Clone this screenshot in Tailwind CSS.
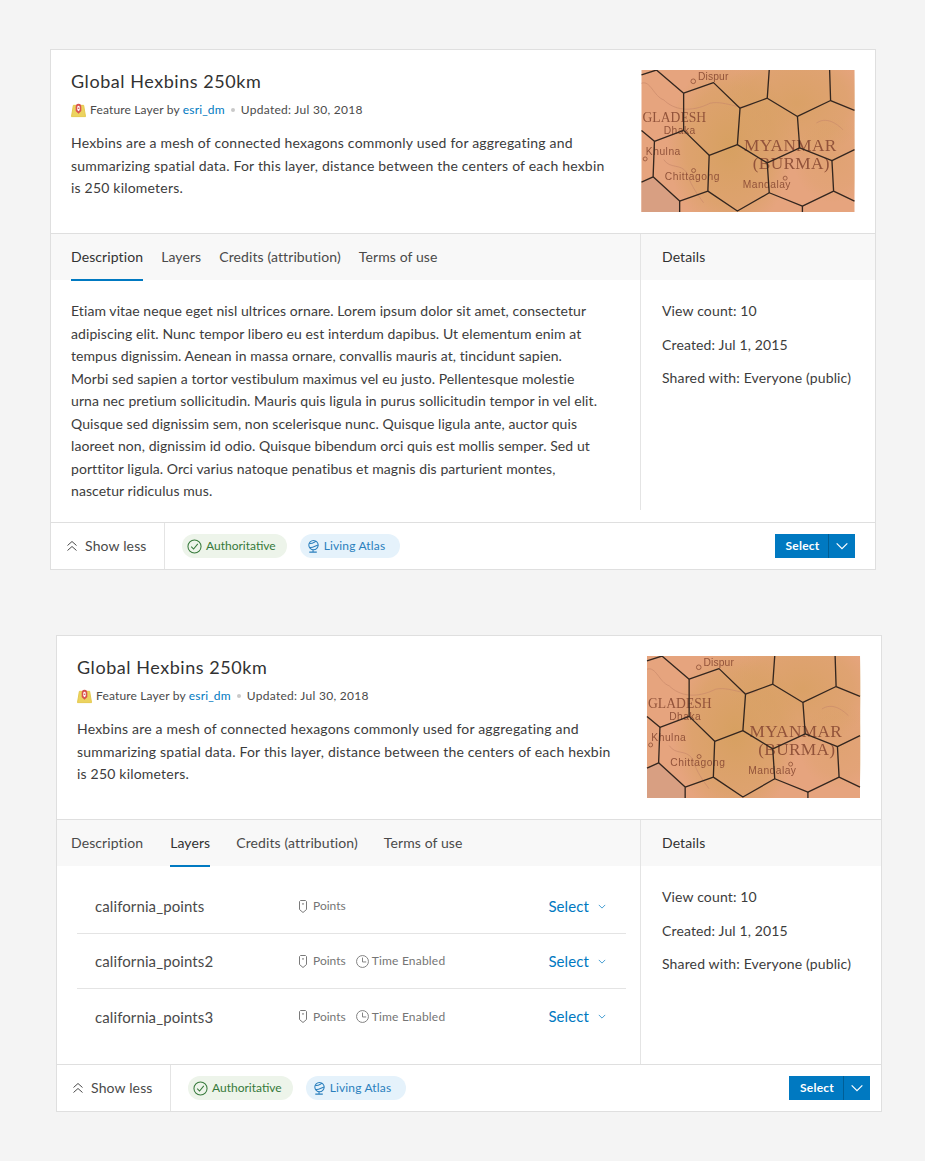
<!DOCTYPE html>
<html lang="en">
<head>
<meta charset="utf-8">
<title>Cards</title>
<script src="https://cdn.jsdelivr.net/npm/@tailwindcss/browser@4"></script>
</head>
<body class="bg-[#f4f4f4] font-['Lato','Noto_Sans',sans-serif] text-[#323232] w-[925px] h-[1161px] overflow-hidden">

<svg width="0" height="0" class="absolute">
  <defs>
    <radialGradient id="gold" cx="50%" cy="50%" r="50%">
      <stop offset="0%" stop-color="#d6a05f" stop-opacity=".95"/>
      <stop offset="70%" stop-color="#d8a164" stop-opacity=".6"/>
      <stop offset="100%" stop-color="#d8a164" stop-opacity="0"/>
    </radialGradient>
    <filter id="soft"><feGaussianBlur stdDeviation="1.5"/></filter>
    <filter id="txt"><feGaussianBlur stdDeviation=".6"/></filter>
  </defs>
  <symbol id="hexmap" viewBox="33 30 642 428">
    <rect x="33" y="30" width="642" height="428" fill="#e6a47e"/>
    <ellipse cx="300" cy="260" rx="190" ry="260" fill="url(#gold)"/>
    <ellipse cx="500" cy="130" rx="220" ry="170" fill="url(#gold)" opacity=".8"/>
    <ellipse cx="610" cy="300" rx="120" ry="130" fill="url(#gold)" opacity=".4"/>
    <polygon points="33,368 68,352 148,425 148,458 33,458" fill="#d89f82"/>
    <g fill="none" stroke="#c9886a" stroke-width="2" filter="url(#soft)">
      <path d="M33 70 C60 60 70 110 100 120 C130 150 180 160 240 130 C290 120 340 160 370 130"/>
      <path d="M100 300 C120 330 150 310 170 340 C180 370 190 390 220 430"/>
      <path d="M560 190 C590 170 620 190 640 210"/>
    </g>
    <g fill="#92533a" font-family="'Liberation Serif',serif" filter="url(#txt)">
      <text x="203" y="61" font-size="31" font-family="'Liberation Sans',sans-serif" textLength="92">Dispur</text>
      <text x="36" y="188" font-size="41" textLength="192">GLADESH</text>
      <text x="100" y="222" font-size="31" font-family="'Liberation Sans',sans-serif" textLength="95">Dhaka</text>
      <text x="46" y="286" font-size="31" font-family="'Liberation Sans',sans-serif" textLength="104">Khulna</text>
      <text x="103" y="362" font-size="31" font-family="'Liberation Sans',sans-serif" textLength="165">Chittagong</text>
      <text x="338" y="385" font-size="31" font-family="'Liberation Sans',sans-serif" textLength="144">Mandalay</text>
      <text x="342" y="275" font-size="52" textLength="278">MYANMAR</text>
      <text x="368" y="329" font-size="52" textLength="232">(BURMA)</text>
    </g>
    <g fill="none" stroke="#92533a" stroke-width="2.500">
      <circle cx="189" cy="64" r="7"/><circle cx="44" cy="298" r="6"/><circle cx="190" cy="333" r="6"/><circle cx="466" cy="356" r="6"/>
    </g>
    <g fill="none" stroke="#33261f" stroke-width="4" stroke-linejoin="round">
      <path d="M33 45 78 30 160 100 250 68 330 145 412 115 418 30"/>
      <path d="M412 115 503 170 603 122 600 30"/>
      <path d="M603 122 675 152"/>
      <path d="M503 170 510 265 607 303 675 270"/>
      <path d="M607 303 612 395 675 425"/>
      <path d="M612 395 518 440 418 400 412 310 510 265"/>
      <path d="M412 310 322 255 330 145"/>
      <path d="M322 255 237 287 160 212 160 100"/>
      <path d="M160 212 72 245 33 212"/>
      <path d="M72 245 68 352 33 368"/>
      <path d="M68 352 148 425 148 458"/>
      <path d="M148 425 233 395 237 287"/>
      <path d="M233 395 322 455 418 400"/>
      <path d="M518 440 518 458"/>
    </g>
  </symbol>
  <symbol id="layericon" viewBox="0 0 16 16">
    <path d="M2.500 2.500 13.500 2.500 15.500 14.500 .5 14.500Z" fill="#ecd35f" stroke="#e3c74a"/>
    <path d="M8 .8C10.400 .8 11 2.500 11 4.500V8.500L8 11.500 5 8.500V4.500C5 2.500 5.600 .8 8 .8Z" fill="#d9534f"/>
    <path d="M8 3C9 3 9.300 3.800 9.300 4.800V7.500L8 8.800 6.700 7.500V4.800C6.700 3.800 7 3 8 3Z" fill="#fff"/>
    <circle cx="8" cy="5.500" r=".8" fill="#d9534f"/>
  </symbol>
  <symbol id="chevdbl" viewBox="0 0 12 12">
    <path d="M1.500 5.500 6 1.500 10.500 5.500M1.500 10.500 6 6.500 10.500 10.500" fill="none" stroke="#4a4a4a" stroke-width="1"/>
  </symbol>
  <symbol id="check" viewBox="0 0 16 16">
    <circle cx="8" cy="8" r="7" fill="none" stroke="#35793a" stroke-width="1.100"/>
    <path d="M4.500 8.200 7 10.700 11.500 5.200" fill="none" stroke="#35793a" stroke-width="1.100"/>
  </symbol>
  <symbol id="globe" viewBox="0 0 16 16">
    <circle cx="8" cy="6.500" r="5" fill="none" stroke="#2a7fbd" stroke-width="1.100"/>
    <path d="M3.500 4.500C6 6 9 3 11 2.500M4 9C7 10 10 7 13 6.500M3.500 14H11.500M7.500 11.500V14" fill="none" stroke="#2a7fbd" stroke-width="1.100"/>
  </symbol>
  <symbol id="pin" viewBox="0 0 8 13">
    <path d="M1.500 .5H6.500L7.500 1.500V9.500L4 12.500 .5 9.500V1.500Z" fill="none" stroke="#7a7a7a" stroke-width="1" stroke-linejoin="round"/>
    <path d="M4 3V4.800" stroke="#7a7a7a" stroke-width="1.200"/>
  </symbol>
  <symbol id="clock" viewBox="0 0 14 14">
    <circle cx="7" cy="7" r="6.400" fill="none" stroke="#7a7a7a" stroke-width="1"/>
    <path d="M7 2.800V7.500H11" fill="none" stroke="#7a7a7a" stroke-width="1"/>
  </symbol>
  <symbol id="chev" viewBox="0 0 10 6">
    <path d="M1 1 5 5 9 1" fill="none" stroke="currentColor" stroke-width=".9"/>
  </symbol>
</svg>

<main class="flex flex-col">

<!-- Card 1 -->
<section class="ml-[50px] mt-[49px] w-[826px] h-[521px] bg-white border border-[#dfdfdf] flex flex-col">
  <header class="h-[184px] shrink-0 flex justify-between pl-5 pr-5 pt-5 border-b border-[#dfdfdf]">
    <div class="w-[540px]">
      <h2 class="-mt-px text-[18px] leading-[24px] tracking-[.55px] text-[#323232]">Global Hexbins 250km</h2>
      <p class="mt-[8px] flex items-center text-[12px] leading-[18px] text-[#4a4a4a]">
        <svg class="w-[15px] h-[15px] mr-1 shrink-0"><use href="#layericon"/></svg>
        <span class="tracking-[.16px]">Feature Layer by <span class="text-[#0079c1]">esri_dm</span></span>
        <span class="mx-[6px] w-[4px] h-[4px] rounded-full bg-[#c9c9c9]"></span>
        <span class="tracking-[.28px]">Updated: Jul 30, 2018</span>
      </p>
      <p class="mt-[13px] text-[14px] leading-[22.5px] tracking-[.2px] text-[#3c3c3c]">Hexbins are a mesh of connected hexagons commonly used for aggregating and summarizing spatial data. For this layer, distance between the centers of each hexbin is 250 kilometers.</p>
    </div>
    <svg class="w-[214px] h-[142px] shrink-0"><use href="#hexmap"/></svg>
  </header>
  <div class="flex flex-1 min-h-0">
    <div class="w-[589px] shrink-0 flex flex-col">
      <nav class="h-[46px] bg-[#f8f8f8] flex pl-5 text-[14px] tracking-[.1px] text-[#4a4a4a]">
        <a class="mr-[18px] h-[47px] pb-px flex items-center border-b-2 border-[#0079c1] text-[#323232]">Description</a>
        <a class="mr-[18px] h-[47px] pb-px flex items-center border-b-2 border-transparent">Layers</a>
        <a class="mr-[18px] h-[47px] pb-px flex items-center border-b-2 border-transparent">Credits (attribution)</a>
        <a class="h-[47px] pb-px flex items-center border-b-2 border-transparent">Terms of use</a>
      </nav>
      <p class="pl-5 pt-[20px] whitespace-nowrap text-[14px] leading-[22.5px] tracking-[.075px] text-[#3c3c3c]">Etiam vitae neque eget nisl ultrices ornare. Lorem ipsum dolor sit amet, consectetur<br>adipiscing elit. Nunc tempor libero eu est interdum dapibus. Ut elementum enim at<br>tempus dignissim. Aenean in massa ornare, convallis mauris at, tincidunt sapien.<br>Morbi sed sapien a tortor vestibulum maximus vel eu justo. Pellentesque molestie<br>urna nec pretium sollicitudin. Mauris quis ligula in purus sollicitudin tempor in vel elit.<br>Quisque sed dignissim sem, non scelerisque nunc. Quisque ligula ante, auctor quis<br>laoreet non, dignissim id odio. Quisque bibendum orci quis est mollis semper. Sed ut<br>porttitor ligula. Orci varius natoque penatibus et magnis dis parturient montes,<br>nascetur ridiculus mus.</p>
    </div>
    <aside class="flex-1 mb-3 border-l border-[#e4e4e4] flex flex-col">
      <div class="h-[46px] bg-[#f8f8f8] pl-[21px] pb-[2px] flex items-center text-[14px] tracking-[.1px] text-[#323232]">Details</div>
      <ul class="pl-[21px] pt-[20px] text-[14px] leading-[22px] tracking-[.14px] text-[#3c3c3c] flex flex-col gap-[11.500px]">
        <li>View count: 10</li>
        <li>Created: Jul 1, 2015</li>
        <li class="whitespace-nowrap">Shared with: Everyone (public)</li>
      </ul>
    </aside>
  </div>
  <footer class="h-[47px] shrink-0 border-t border-[#dfdfdf] flex items-center">
    <div class="w-[114px] h-full border-r border-[#e4e4e4] flex items-center pl-[15px] pb-[2px] text-[14px] tracking-[.15px] text-[#4a4a4a]">
      <svg class="w-3 h-3 mr-[7px] mt-[2px]"><use href="#chevdbl"/></svg>Show less
    </div>
    <span class="ml-[17px] h-6 pl-[5px] pr-[11px] rounded-full bg-[#edf4ea] flex items-center text-[12px] text-[#35793a]">
      <svg class="w-[15px] h-[15px] mr-[4px]"><use href="#check"/></svg>Authoritative
    </span>
    <span class="ml-[13px] h-6 pl-[6px] pr-[15px] rounded-full bg-[#e5f2fb] flex items-center text-[12px] tracking-[.15px] text-[#2a7fbd]">
      <svg class="w-[15px] h-[15px] mr-[3px]"><use href="#globe"/></svg>Living Atlas
    </span>
    <div class="ml-auto mr-5 w-[80px] h-6 bg-[#0079c1] flex items-center text-white text-[12px] font-bold tracking-[.2px]">
      <span class="flex-1 text-center pl-[2px]">Select</span>
      <span class="w-[27px] h-full border-l border-[#005e95] flex items-center justify-center"><svg class="w-[14px] h-[8px] text-white"><use href="#chev"/></svg></span>
    </div>
  </footer>
</section>

<!-- Card 2 -->
<section class="ml-[56px] mt-[65px] w-[826px] h-[477px] bg-white border border-[#dfdfdf] flex flex-col">
  <header class="h-[184px] shrink-0 flex justify-between pl-5 pr-5 pt-5 border-b border-[#dfdfdf]">
    <div class="w-[540px]">
      <h2 class="-mt-px text-[18px] leading-[24px] tracking-[.55px] text-[#323232]">Global Hexbins 250km</h2>
      <p class="mt-[8px] flex items-center text-[12px] leading-[18px] text-[#4a4a4a]">
        <svg class="w-[15px] h-[15px] mr-1 shrink-0"><use href="#layericon"/></svg>
        <span class="tracking-[.16px]">Feature Layer by <span class="text-[#0079c1]">esri_dm</span></span>
        <span class="mx-[6px] w-[4px] h-[4px] rounded-full bg-[#c9c9c9]"></span>
        <span class="tracking-[.28px]">Updated: Jul 30, 2018</span>
      </p>
      <p class="mt-[13px] text-[14px] leading-[22.5px] tracking-[.2px] text-[#3c3c3c]">Hexbins are a mesh of connected hexagons commonly used for aggregating and summarizing spatial data. For this layer, distance between the centers of each hexbin is 250 kilometers.</p>
    </div>
    <svg class="w-[215px] h-[142px] shrink-0"><use href="#hexmap"/></svg>
  </header>
  <div class="flex flex-1 min-h-0">
    <div class="w-[583px] shrink-0 flex flex-col">
      <nav class="h-[46px] bg-[#f8f8f8] flex pl-[14px] text-[14px] tracking-[.1px] text-[#4a4a4a]">
        <a class="mr-[27px] h-[47px] pb-px flex items-center border-b-2 border-transparent">Description</a>
        <a class="mr-[26px] h-[47px] pb-px flex items-center border-b-2 border-[#0079c1] text-[#323232]">Layers</a>
        <a class="mr-[26px] h-[47px] pb-px flex items-center border-b-2 border-transparent">Credits (attribution)</a>
        <a class="h-[47px] pb-px flex items-center border-b-2 border-transparent">Terms of use</a>
      </nav>
      <ul class="ml-5 mr-[14px] flex flex-col">
        <li class="h-[68px] pt-[13px] flex items-center border-b border-[#e4e4e4] text-[#4a4a4a]">
          <span class="w-[222px] pl-[18px] pt-[1px] text-[15px] tracking-[.1px]">california_points</span>
          <span class="flex items-center text-[12px] text-[#757575]"><svg class="w-[8px] h-[13px] mr-[6px]"><use href="#pin"/></svg>Points</span>
          <span class="ml-auto mr-[20px] flex items-center text-[15px] tracking-[.1px] text-[#0079c1]">Select<svg class="w-[8px] h-[5px] ml-[9px]"><use href="#chev"/></svg></span>
        </li>
        <li class="h-[55px] flex items-center border-b border-[#e4e4e4] text-[#4a4a4a]">
          <span class="w-[222px] pl-[18px] pt-[1px] text-[15px] tracking-[.1px]">california_points2</span>
          <span class="flex items-center text-[12px] text-[#757575]"><svg class="w-[8px] h-[13px] mr-[6px]"><use href="#pin"/></svg>Points<svg class="w-[13px] h-[13px] ml-[10px] mr-[3px]"><use href="#clock"/></svg><span class="tracking-[.2px]">Time Enabled</span></span>
          <span class="ml-auto mr-[20px] flex items-center text-[15px] tracking-[.1px] text-[#0079c1]">Select<svg class="w-[8px] h-[5px] ml-[9px]"><use href="#chev"/></svg></span>
        </li>
        <li class="h-[55px] flex items-center text-[#4a4a4a]">
          <span class="w-[222px] pl-[18px] pt-[1px] text-[15px] tracking-[.1px]">california_points3</span>
          <span class="flex items-center text-[12px] text-[#757575]"><svg class="w-[8px] h-[13px] mr-[6px]"><use href="#pin"/></svg>Points<svg class="w-[13px] h-[13px] ml-[10px] mr-[3px]"><use href="#clock"/></svg><span class="tracking-[.2px]">Time Enabled</span></span>
          <span class="ml-auto mr-[20px] flex items-center text-[15px] tracking-[.1px] text-[#0079c1]">Select<svg class="w-[8px] h-[5px] ml-[9px]"><use href="#chev"/></svg></span>
        </li>
      </ul>
    </div>
    <aside class="flex-1 border-l border-[#e4e4e4] flex flex-col">
      <div class="h-[46px] bg-[#f8f8f8] pl-[21px] pb-[2px] flex items-center text-[14px] tracking-[.1px] text-[#323232]">Details</div>
      <ul class="pl-[21px] pt-[20px] text-[14px] leading-[22px] tracking-[.14px] text-[#3c3c3c] flex flex-col gap-[11.500px]">
        <li>View count: 10</li>
        <li>Created: Jul 1, 2015</li>
        <li class="whitespace-nowrap">Shared with: Everyone (public)</li>
      </ul>
    </aside>
  </div>
  <footer class="h-[47px] shrink-0 border-t border-[#dfdfdf] flex items-center">
    <div class="w-[114px] h-full border-r border-[#e4e4e4] flex items-center pl-[15px] pb-[2px] text-[14px] tracking-[.15px] text-[#4a4a4a]">
      <svg class="w-3 h-3 mr-[7px] mt-[2px]"><use href="#chevdbl"/></svg>Show less
    </div>
    <span class="ml-[17px] h-6 pl-[5px] pr-[11px] rounded-full bg-[#edf4ea] flex items-center text-[12px] text-[#35793a]">
      <svg class="w-[15px] h-[15px] mr-[4px]"><use href="#check"/></svg>Authoritative
    </span>
    <span class="ml-[13px] h-6 pl-[6px] pr-[15px] rounded-full bg-[#e5f2fb] flex items-center text-[12px] tracking-[.15px] text-[#2a7fbd]">
      <svg class="w-[15px] h-[15px] mr-[3px]"><use href="#globe"/></svg>Living Atlas
    </span>
    <div class="ml-auto mr-[11px] w-[81px] h-6 bg-[#0079c1] flex items-center text-white text-[12px] font-bold tracking-[.2px]">
      <span class="flex-1 text-center pl-[2px]">Select</span>
      <span class="w-[27px] h-full border-l border-[#005e95] flex items-center justify-center"><svg class="w-[14px] h-[8px] text-white"><use href="#chev"/></svg></span>
    </div>
  </footer>
</section>

</main>
</body>
</html>
